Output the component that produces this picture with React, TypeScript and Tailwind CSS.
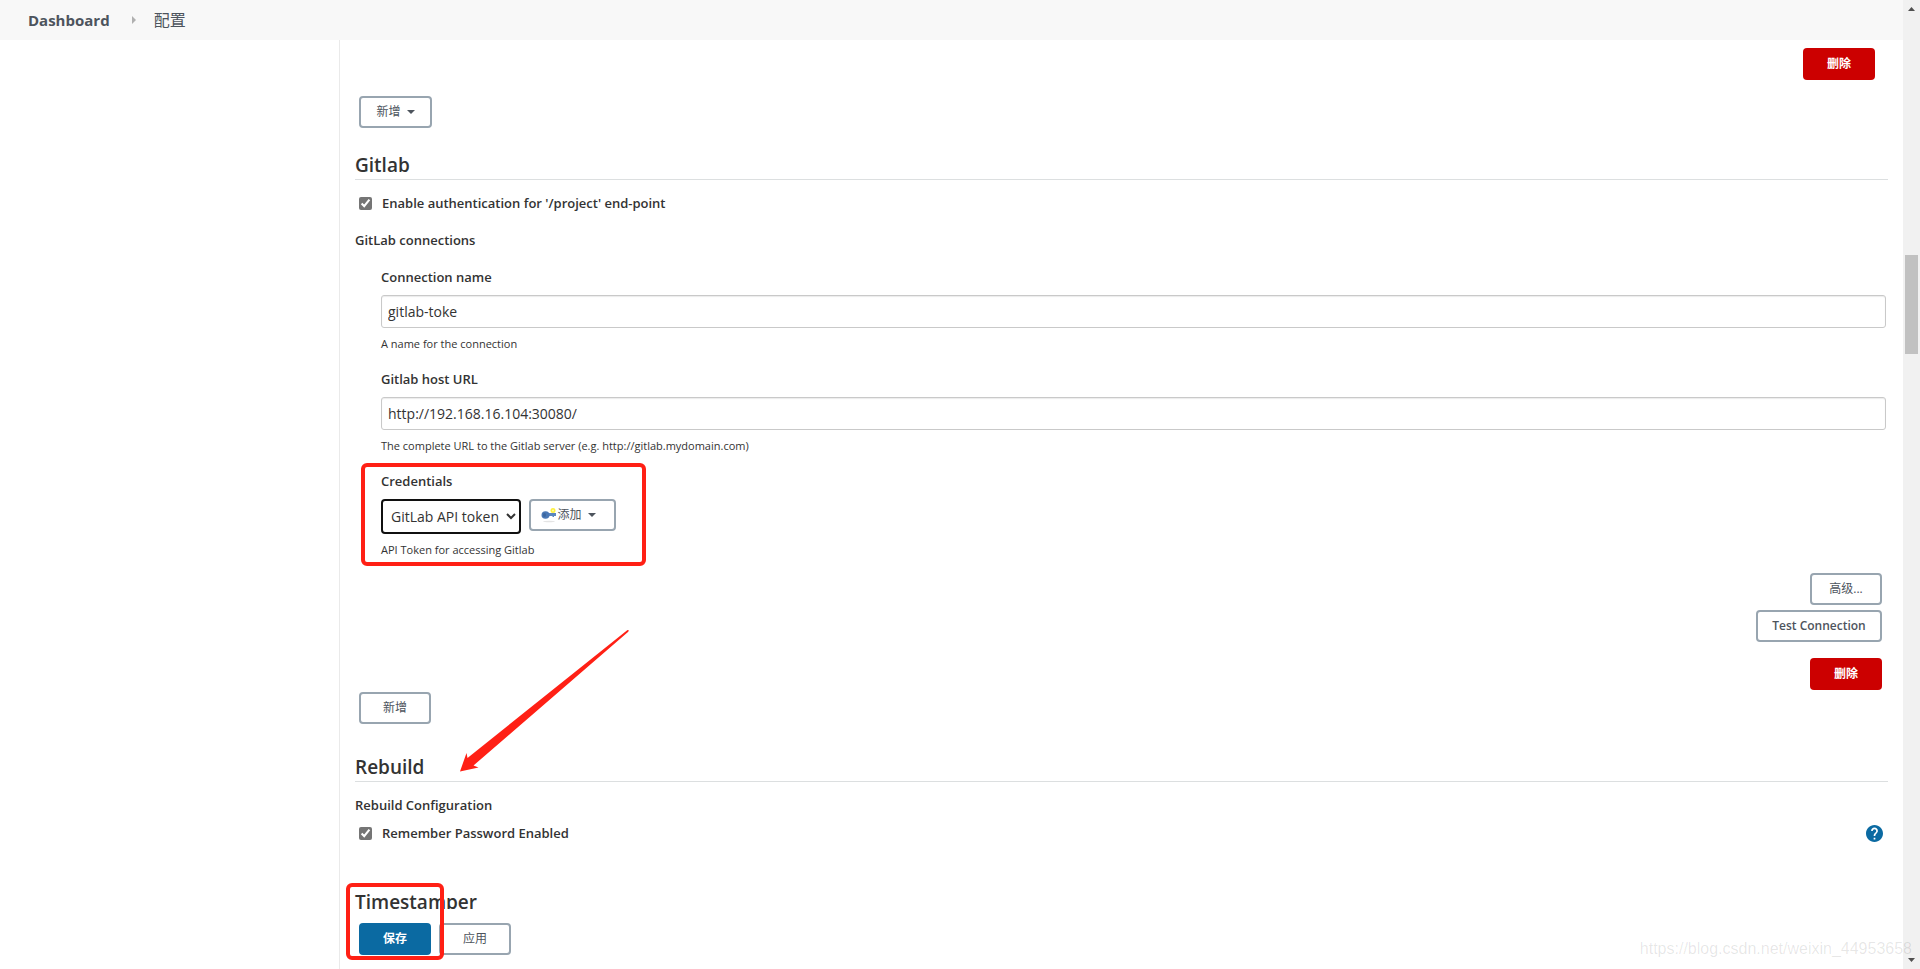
import React from 'react';

const buttonBase = 'h-8 rounded text-xs flex items-center justify-center';
const outlineButton = `${buttonBase} border-2 border-[#98a5b0] bg-white text-[#4d545d]`;
const dangerButton = `${buttonBase} w-[72px] bg-[#cc0000] font-semibold text-white`;
const fieldLabel = 'text-[13px] leading-5 font-semibold';

const Caret: React.FC = () => (
  <svg className="ml-1.5" width="8" height="4" viewBox="0 0 8 4" fill="currentColor">
    <path d="M0 0h8L4 4z" />
  </svg>
);

const KeyIcon: React.FC = () => (
  <svg width="16" height="16" viewBox="0 0 16 16">
    <ellipse cx="8" cy="14.500" rx="6" ry="0.800" fill="#e4e4e4" />
    <path d="M7 6h8v3h-2v1h-1.500V9H7z" fill="#5b86be" />
    <ellipse cx="4.500" cy="8" rx="4" ry="3.800" fill="#4a78b5" />
    <ellipse cx="3.500" cy="8" rx="1.500" ry="2" fill="#3b669f" />
    <circle cx="12" cy="3.500" r="2.500" fill="#fdf03c" />
    <circle cx="12" cy="3.500" r="1" fill="#fffbb0" />
  </svg>
);

const HelpIcon: React.FC = () => (
  <svg width="17" height="17" viewBox="2 2 20 20">
    <path
      fill="#0b6aa2"
      d="M12 2C6.48 2 2 6.48 2 12s4.48 10 10 10 10-4.48 10-10S17.52 2 12 2zm1 17h-2v-2h2v2zm2.07-7.75-.9.92C13.45 12.9 13 13.5 13 15h-2v-.5c0-1.1.45-2.1 1.17-2.83l1.24-1.26c.37-.36.59-.86.59-1.41 0-1.1-.9-2-2-2s-2 .9-2 2H8c0-2.21 1.79-4 4-4s4 1.79 4 4c0 .88-.36 1.68-.93 2.25z"
    />
  </svg>
);

interface SectionTitleProps {
  children: React.ReactNode;
}

const SectionTitle: React.FC<SectionTitleProps> = ({ children }) => (
  <h2 className="border-b border-[#dcdfe0] pb-px text-[19px] leading-[26px] font-semibold">{children}</h2>
);

interface CheckboxRowProps {
  id: string;
  label: string;
}

const CheckboxRow: React.FC<CheckboxRowProps> = ({ id, label }) => (
  <div className="flex items-center pl-1">
    <input id={id} type="checkbox" defaultChecked className="h-[13px] w-[13px] accent-[#757575]" />
    <label htmlFor={id} className={`${fieldLabel} pl-2.5`}>{label}</label>
  </div>
);

interface TextFieldProps {
  id: string;
  label: string;
  value: string;
  help: string;
}

const TextField: React.FC<TextFieldProps> = ({ id, label, value, help }) => (
  <div className="flex flex-col gap-2">
    <label htmlFor={id} className={fieldLabel}>{label}</label>
    <input
      id={id}
      type="text"
      defaultValue={value}
      className="h-[33px] w-full rounded-[3px] border border-[#c9c9c9] px-1.5 shadow-[inset_0_1px_1px_rgba(0,0,0,0.08)]"
    />
    <p className="text-[11px] leading-4">{help}</p>
  </div>
);

const App: React.FC = () => {
  return (
    <div className="relative flex h-screen overflow-hidden bg-white font-['Segoe_UI','Open_Sans','Noto_Sans_CJK_SC',sans-serif] text-sm leading-5 text-[#333]">
      <div className="flex min-w-0 flex-1 flex-col">
        <nav className="flex h-10 shrink-0 items-center bg-[#f8f8f8] pl-7 text-[#4d545d]">
          <a href="#" className="text-[15px] font-bold">Dashboard</a>
          <svg className="mx-4" width="12" height="8" viewBox="0 0 12 8" fill="#b0b0b0">
            <path d="M6 0l4 4-4 4z" />
          </svg>
          <a href="#" className="text-base">配置</a>
        </nav>

        <div className="flex min-h-0 flex-1">
          <aside className="w-[340px] shrink-0 border-r border-[#eaeaea]" />

          <main className="flex min-w-0 flex-1 flex-col">
            <div className="min-h-0 flex-1 overflow-hidden px-[15px] pt-2">
              <div className="flex justify-end pr-[13px]">
                <button className={dangerButton}>删除</button>
              </div>
              <button className={`${outlineButton} mt-4 ml-1 w-[73px]`}>
                新增
                <Caret />
              </button>

              <section className="mt-6">
                <SectionTitle>Gitlab</SectionTitle>
                <div className="mt-[13px]">
                  <CheckboxRow id="auth" label="Enable authentication for '/project' end-point" />
                </div>
                <h3 className={`${fieldLabel} mt-[17px]`}>GitLab connections</h3>

                <div className="mt-[17px] flex flex-col gap-[17px] pr-0.5 pl-[26px]">
                  <TextField
                    id="connection-name"
                    label="Connection name"
                    value="gitlab-toke"
                    help="A name for the connection"
                  />
                  <TextField
                    id="host-url"
                    label="Gitlab host URL"
                    value="http://192.168.16.104:30080/"
                    help="The complete URL to the Gitlab server (e.g. http://gitlab.mydomain.com)"
                  />
                  <div className="relative flex flex-col gap-2 self-start">
                    <label htmlFor="credentials" className={fieldLabel}>Credentials</label>
                    <div className="flex items-start gap-2">
                      <select
                        id="credentials"
                        className="h-[35px] w-[140px] rounded border-2 border-[#101010] bg-white pl-1"
                      >
                        <option>GitLab API token</option>
                      </select>
                      <button className={`${outlineButton} w-[87px] pr-2`}>
                        <KeyIcon />
                        添加
                        <Caret />
                      </button>
                    </div>
                    <p className="text-[11px] leading-4">API Token for accessing Gitlab</p>
                    <div className="pointer-events-none absolute -top-2 -right-[30px] -bottom-2 -left-5 rounded-md border-4 border-[#ff2015]" />
                  </div>
                </div>

                <div className="mt-[15px] flex flex-col items-end pr-1.5">
                  <button className={`${outlineButton} w-[72px]`}>高级...</button>
                  <button className={`${outlineButton} mt-[5px] w-[126px] font-semibold`}>Test Connection</button>
                  <button className={`${dangerButton} mt-4`}>删除</button>
                </div>
                <button className={`${outlineButton} mt-0.5 ml-1 w-[72px]`}>新增</button>
              </section>

              <section className="relative mt-[30px]">
                <SectionTitle>Rebuild</SectionTitle>
                <h3 className={`${fieldLabel} mt-[13px]`}>Rebuild Configuration</h3>
                <div className="mt-2 flex items-center justify-between pr-[5px]">
                  <CheckboxRow id="remember" label="Remember Password Enabled" />
                  <a href="#" aria-label="Help">
                    <HelpIcon />
                  </a>
                </div>
                <svg
                  className="pointer-events-none absolute -top-[124px] left-[104px]"
                  width="172"
                  height="144"
                  viewBox="0 0 172 144"
                >
                  <path
                    d="M168.500 0L170 0.500L169 2L14.500 135.500L19.500 137.500L1 141.500L7.500 123L8.500 128Z"
                    fill="#ff2015"
                  />
                </svg>
              </section>

              <section className="mt-[46px]">
                <SectionTitle>Timestamper</SectionTitle>
              </section>
            </div>

            <footer className="relative flex h-[60px] shrink-0 gap-2 pt-3.5 pl-[19px]">
              <button className={`${buttonBase} w-[72px] bg-[#0b6aa2] font-semibold text-white`}>保存</button>
              <button className={`${outlineButton} w-[72px]`}>应用</button>
              <div className="pointer-events-none absolute -top-[26px] left-1.5 h-[77px] w-[98px] rounded-md border-4 border-[#ff2015]" />
            </footer>
          </main>
        </div>
      </div>

      <div className="flex w-[17px] shrink-0 flex-col items-center bg-[#f1f1f1] pt-[7px] pb-[7px]">
        <svg width="7" height="4" viewBox="0 0 7 4" fill="#505050">
          <path d="M0 4h7L3.500 0z" />
        </svg>
        <div className="mt-[244px] h-[99px] w-[13px] bg-[#c1c1c1]" />
        <svg className="mt-auto" width="7" height="4" viewBox="0 0 7 4" fill="#505050">
          <path d="M0 0h7L3.500 4z" />
        </svg>
      </div>

      <div className="pointer-events-none absolute right-2 bottom-2 font-['Liberation_Sans',sans-serif] text-base text-black/10">
        https://blog.csdn.net/weixin_44953658
      </div>
    </div>
  );
};

export default App;
